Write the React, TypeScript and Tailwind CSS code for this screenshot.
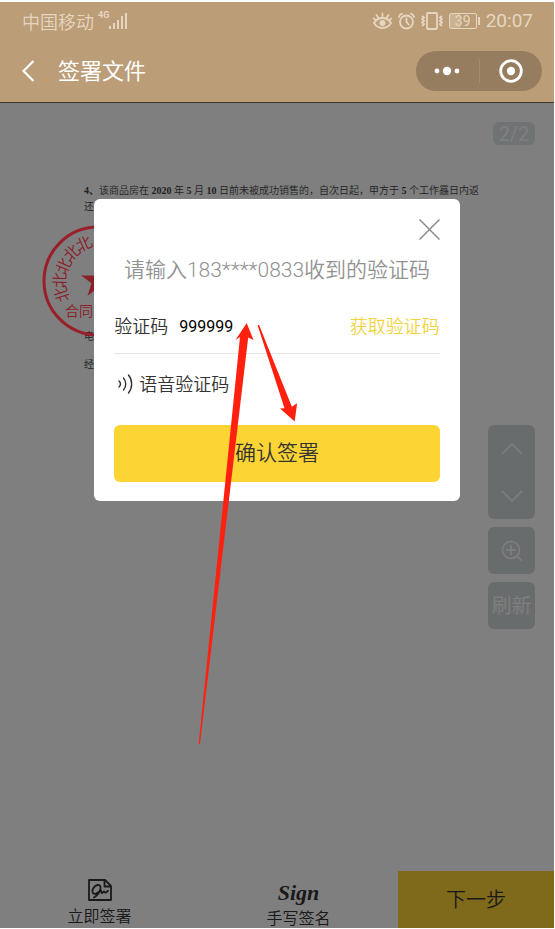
import React, { useState } from 'react';

const EyeIcon = () => (
  <svg width="19" height="18" viewBox="0 0 19 18" fill="none" stroke="currentColor" strokeWidth="1.8" strokeLinecap="round">
    <path d="M1 11C3 7.800 6 6 9.500 6S16 7.800 18 11c-2 3.200-5 5-8.500 5S3 14.200 1 11z" />
    <circle cx="9.500" cy="11" r="3" fill="currentColor" stroke="none" />
    <path d="M9.500 1.500v3M3.500 3l1.700 2.600M15.500 3l-1.700 2.600M.9 6.500l1.600 1.700M18.100 6.500l-1.600 1.700" />
  </svg>
);

const AlarmIcon = () => (
  <svg width="17" height="18" viewBox="0 0 17 18" fill="none" stroke="currentColor" strokeWidth="1.8" strokeLinecap="round">
    <circle cx="8.500" cy="10" r="6.500" />
    <path d="M8.500 6.500V10l2.300 2.600M.9 5C1.300 3.400 2.400 2.200 4 1.700M16.100 5c-.4-1.600-1.500-2.800-3.100-3.300" />
  </svg>
);

const VibrateIcon = () => (
  <svg width="22" height="18" viewBox="0 0 22 18" fill="none" stroke="currentColor" strokeWidth="1.8">
    <rect x="6" y="1" width="10" height="16" rx="1" />
    <path d="M1 4l2 1.300L1 7l2 1.700-2 1.700 2 1.700L1 14M21 4l-2 1.300L21 7l-2 1.700 2 1.700-2 1.700 2 1.900" />
  </svg>
);

const SignalIcon = () => (
  <svg width="18" height="18" viewBox="0 0 18 18" fill="currentColor">
    <rect x="0" y="14" width="2" height="3" />
    <rect x="4" y="11" width="2" height="6" />
    <rect x="8" y="8" width="2" height="9" />
    <rect x="12" y="4" width="2" height="13" />
    <rect x="16" y="1" width="2" height="16" />
  </svg>
);

const SignDocIcon = () => (
  <svg className="shrink-0" width="24" height="22" viewBox="0 0 24 22" fill="none" stroke="currentColor" strokeWidth="1.8" strokeLinejoin="round">
    <path d="M1 1h16l6 6v14H1z" />
    <path d="M16.500 1v6.500H23" />
    <path d="M6 18.500c3-2 6-5.500 6.500-9C12.800 7 11.500 5.600 9.500 6 6.500 6.600 4 10 4.500 13c.5 2.600 3.600 2.300 5.500.5 1.200-1 2-2 2.800-2.200.8 0 0 2.700 1 2.800 1 .2 1.400-1.600 2.200-1.600s.5 1.300 1.500 1.200 1.500-1.200 2.500-2" strokeLinecap="round" />
  </svg>
);

const VoiceIcon = () => (
  <svg width="17" height="20" viewBox="0 0 17 20" fill="none" stroke="currentColor" strokeWidth="1.4" strokeLinecap="round">
    <path d="M1 7c1.800 1.800 1.800 4.200 0 6M5.500 4c3 3.400 3 8.600 0 12M10.500 1c4.200 5 4.200 13 0 18" />
  </svg>
);

const sealChars = [
  { x: 63, y: 295, r: -108 },
  { x: 61, y: 281, r: -88 },
  { x: 65, y: 267, r: -67 },
  { x: 73, y: 254, r: -45 },
  { x: 85, y: 245, r: -24 },
];

const Seal = () => (
  <svg className="absolute left-10 top-[120px]" width="116" height="116" viewBox="41 224 116 116" fill="#8c2029">
    <circle cx="99" cy="282" r="54" fill="none" stroke="#991f2a" strokeWidth="3" />
    <path d="M99 264l4 12.500h13l-10.500 7.800 4 12.500-10.500-7.700-10.500 7.700 4-12.500L82 276.500h13z" />
    {sealChars.map((c) => (
      <text key={c.r} x={c.x} y={c.y} fontSize="16" textAnchor="middle" dominantBaseline="central" transform={`rotate(${c.r} ${c.x} ${c.y})`}>
        北
      </text>
    ))}
    <text x="66" y="317" fontSize="14">合同</text>
  </svg>
);

const Arrows = () => (
  <svg className="absolute left-[104px] top-[124px] pointer-events-none" width="100" height="422" viewBox="198 323 100 422" fill="#ff2010">
    <path d="M246.700 323L253.500 340l-5.300-2.500L200 743.700h-1.300L240 337l-4.500 3z" />
    <path d="M257.500 325h1.600l32.800 81.700 5.200-3.500-2.400 18.200L280 408.500l4.500-.3z" />
  </svg>
);

const App: React.FC = () => {
  const [code, setCode] = useState<string>('999999');
  const [isOpen, setIsOpen] = useState<boolean>(true);

  return (
    <div className="min-h-screen flex flex-col bg-white pt-0.5 pr-px pb-px font-[350] text-[#333] [font-family:Roboto,'Noto_Sans_CJK_SC',sans-serif]">
      {/* Header */}
      <header className="bg-[#bb9d77] border-b border-[#3a352e]">
        <div className="h-[38px] flex items-center justify-between pl-[22px] pr-[21px] text-[#e6d6c1]">
          <div className="flex items-center text-lg">
            <span className="pt-1">中国移动</span>
            <span className="self-start ml-1 text-[9px] leading-5 font-bold">4G</span>
            <SignalIcon />
          </div>
          <div className="flex items-center gap-1.5 font-normal">
            <EyeIcon />
            <AlarmIcon />
            <VibrateIcon />
            <div className="flex items-center gap-px">
              <span className="w-7 h-4 flex items-center justify-center border border-current rounded-xs text-sm bg-linear-to-r from-[#cbb291] from-40% to-transparent to-40%">39</span>
              <span className="w-0.5 h-2 bg-current" />
            </div>
            <span className="text-[19px]">20:07</span>
          </div>
        </div>
        <div className="h-[62px] flex items-center justify-between pl-[22px] pr-3 text-white">
          <div className="flex items-center gap-6">
            <button aria-label="返回">
              <svg width="12" height="22" viewBox="0 0 12 22" fill="none" stroke="currentColor" strokeWidth="2.2">
                <path d="M11.500 1L1.500 11l10 10" />
              </svg>
            </button>
            <h1 className="text-[22px] font-normal">签署文件</h1>
          </div>
          <div className="w-[126px] h-10 flex items-center rounded-full bg-[#977d60]">
            <button aria-label="更多" className="flex-1 flex justify-center">
              <svg width="26" height="10" viewBox="0 0 26 10" fill="currentColor">
                <circle cx="3" cy="5" r="2.400" />
                <circle cx="13" cy="5" r="4.200" />
                <circle cx="23" cy="5" r="2.400" />
              </svg>
            </button>
            <span className="w-px h-6 bg-[#a58c6f]" />
            <button aria-label="关闭小程序" className="flex-1 flex justify-center">
              <svg width="24" height="24" viewBox="0 0 24 24">
                <circle cx="12" cy="12" r="10.300" fill="none" stroke="currentColor" strokeWidth="2.800" />
                <circle cx="12" cy="12" r="4.200" fill="currentColor" />
              </svg>
            </button>
          </div>
        </div>
      </header>

      <div className="relative flex-1 flex flex-col">
        {/* Document */}
        <main className="relative flex-1 pt-20 pl-[84px] text-[10px] leading-4 text-[#444]">
          <p className="whitespace-nowrap [font-family:'Liberation_Serif','Noto_Sans_CJK_SC',serif]">
            <b>4、</b>该商品房在 <b>2020</b> 年 <b>5</b> 月 <b>10</b> 日前未被成功销售的，自次日起，甲方于 <b>5</b> 个工作靐日内返
          </p>
          <p>还</p>
          <p className="mt-[114px]">电</p>
          <p className="mt-3">经</p>
          <span className="absolute right-[19px] top-[19px] w-[42px] h-[23px] flex items-center justify-center rounded-md bg-[#dfe6e8] text-xl font-normal text-white">2/2</span>
          <div className="absolute right-[19px] top-[322px] w-[47px] flex flex-col gap-2 text-white">
            <div className="h-[94px] flex flex-col rounded-md bg-[#d3d8db]">
              <button aria-label="上一页" className="flex-1 flex items-center justify-center">
                <svg width="22" height="12" viewBox="0 0 22 12" fill="none" stroke="currentColor" strokeWidth="1.5"><path d="M1 11L11 1l10 10" /></svg>
              </button>
              <button aria-label="下一页" className="flex-1 flex items-center justify-center">
                <svg width="22" height="12" viewBox="0 0 22 12" fill="none" stroke="currentColor" strokeWidth="1.5"><path d="M1 1l10 10L21 1" /></svg>
              </button>
            </div>
            <button aria-label="放大" className="h-[47px] flex items-center justify-center rounded-md bg-[#d3d8db]">
              <svg width="22" height="22" viewBox="0 0 22 22" fill="none" stroke="currentColor" strokeWidth="1.5">
                <circle cx="10" cy="10" r="8.500" />
                <path d="M10 5v10M5 10h10M16 16l5 5" />
              </svg>
            </button>
            <button className="h-[47px] rounded-md bg-[#d3d8db] text-xl">刷新</button>
          </div>
        </main>

        {/* Bottom bar */}
        <footer className="h-[57px] flex">
          <button className="flex-1 flex flex-col items-center pt-2 text-base leading-5">
            <SignDocIcon />
            <span className="mt-1.5">立即签署</span>
          </button>
          <button className="flex-1 flex flex-col items-center pt-2 text-base leading-5">
            <span className="mt-1 text-[22px] leading-5 font-bold italic [font-family:'Liberation_Serif',serif]">Sign</span>
            <span className="mt-1.5">手写签名</span>
          </button>
          <button className="w-[156px] bg-[#fcd535] text-xl">下一步</button>
        </footer>

        {/* Verification dialog */}
        {isOpen && (
          <div className="absolute inset-0 bg-black/50 pt-24">
            <Seal />
            <div role="dialog" aria-label="验证码" className="relative w-[66%] mx-auto px-5 pt-5 pb-[19px] bg-white rounded-md">
              <div className="flex justify-end">
                <button aria-label="关闭" onClick={() => setIsOpen(false)} className="text-[#8c8c8c]">
                  <svg width="21" height="21" viewBox="0 0 21 21" fill="none" stroke="currentColor" strokeWidth="1.5"><path d="M.5.5l20 20M20.500.5l-20 20" /></svg>
                </button>
              </div>
              <p className="mt-3.5 text-[21px] leading-8 text-center whitespace-nowrap text-[#929292]">请输入183****0833收到的验证码</p>
              <div className="mt-3 h-14 flex items-center pt-0.5 border-b border-[#e6e6e6] text-lg">
                <label htmlFor="code">验证码</label>
                <input
                  id="code"
                  value={code}
                  onChange={(e) => setCode(e.target.value)}
                  className="flex-1 min-w-0 ml-[11px] text-base font-normal text-black focus:outline-none"
                />
                <button className="text-[#f3d33f]">获取验证码</button>
              </div>
              <button className="h-[60px] flex items-center gap-1 pl-1 text-lg">
                <VoiceIcon />
                <span className="pt-0.5">语音验证码</span>
              </button>
              <button className="mt-[11px] w-full h-[57px] rounded-md bg-[#fcd535] text-[21px]">确认签署</button>
              <Arrows />
            </div>
          </div>
        )}
      </div>
    </div>
  );
};

export default App;
